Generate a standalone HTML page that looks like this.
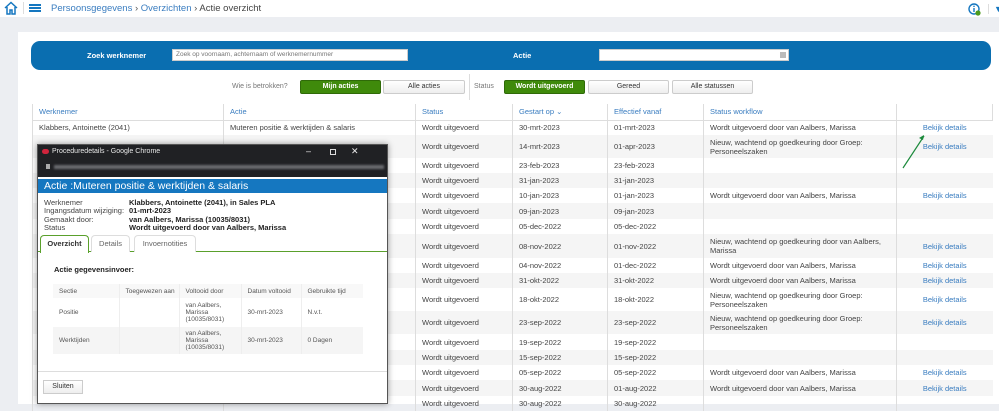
<!DOCTYPE html>
<html><head><meta charset="utf-8"><style>
*{box-sizing:border-box;margin:0;padding:0}
body{width:999px;height:404px;overflow:hidden;background:#eceef2;font-family:"Liberation Sans",Arial,sans-serif;font-size:8px;color:#333;position:relative}
.top{position:absolute;left:0;top:0;width:999px;height:17px;background:#fff;font-size:9.5px}
.panel{position:absolute;left:18px;top:32px;width:981px;height:372px;background:#fff}
.search{position:absolute;left:31px;top:41px;width:960px;height:29px;background:#0a6eb0;border-radius:9px}
.search b{position:absolute;color:#fff;font-size:7.5px;top:10px}
.inp{position:absolute;top:8px;height:12px;background:#fff;border:1px solid #ccc;font-size:6.5px;color:#777;padding:1px 3px}
.btn{position:absolute;top:80px;height:14px;border:1px solid #ccc;background:linear-gradient(#fff,#eee);font-size:7px;text-align:center;line-height:12px;color:#333;border-radius:2px}
.btn.g{background:#3f8a0b;border-color:#2f6a08;color:#fff;font-weight:bold}
table.m{position:absolute;left:32px;top:104px;border-collapse:collapse;font-size:7.5px;color:#444}
table.m td{border-left:1px solid #ddd;padding:0 6px;vertical-align:middle}
table.m tr.h td{height:16px;color:#3a7dc0;border-bottom:1px solid #ddd;background:#fff}
table.m tr:nth-child(odd):not(.h){background:#f5f5f5}
a{color:#3a7dc0;text-decoration:none}
.pop{position:absolute;left:37px;top:144px;width:351px;height:260px;background:#fff;border:1px solid #555;box-shadow:0 0 6px rgba(0,0,0,.4)}
.chrome{height:32px;background:#202124;color:#e8e8e8;font-size:7px;position:relative}
.bh{height:14px;background:#1577c0;color:#fff;font-size:10.5px;padding-left:6px;line-height:14px;margin-top:2px}
.info{padding:6px 0 0 6px;font-size:7.5px;line-height:8.3px;color:#444}
.info span{display:inline-block;width:85px}
.info b{color:#222}
.tabs{position:relative;height:17px;margin-top:3px;border-bottom:1px solid #5aa02c}
.tab{position:absolute;top:0;height:17px;border:1px solid #ddd;border-bottom:none;border-radius:4px 4px 0 0;font-size:7.5px;text-align:center;line-height:15px;color:#666;background:#fff}
table.s{border-collapse:collapse;font-size:6.5px;color:#555;margin-left:15px;table-layout:fixed;width:310px}
table.s td{padding:0 6px;border-left:1px solid #eee;white-space:nowrap}
</style></head><body>
<div class="top">
<svg style="position:absolute;left:4px;top:1px" width="14" height="14" viewBox="0 0 14 14"><path d="M1 7L7 1.5 13 7M3 6v7h3v-4h2v4h3V6" fill="none" stroke="#1577c0" stroke-width="1.5"/></svg>
<div style="position:absolute;left:23px;top:2px;width:1px;height:12px;background:#ddd"></div>
<div style="position:absolute;left:29px;top:4px;width:12px;height:2px;background:#1577c0;box-shadow:0 3px 0 #1577c0,0 6px 0 #1577c0"></div>
<div style="position:absolute;left:51px;top:3px;color:#3a7dc0">Persoonsgegevens <span style="color:#555">›</span> Overzichten <span style="color:#555">›</span> <span style="color:#444">Actie overzicht</span></div>
<svg style="position:absolute;left:968px;top:3px" width="14" height="13"><circle cx="6" cy="6" r="5" fill="none" stroke="#1577c0" stroke-width="1.4"/><rect x="5.3" y="5" width="1.4" height="4" fill="#1577c0"/><circle cx="6" cy="3.3" r=".8" fill="#1577c0"/><circle cx="10" cy="10" r="2.6" fill="#4c9a1b"/></svg>
<div style="position:absolute;left:988px;top:4px;width:1px;height:10px;background:#ddd"></div>
<div style="position:absolute;left:994px;top:4px;color:#1577c0;font-size:9px;font-weight:bold">▼</div>
</div>
<div class="panel"></div>
<div class="search"><b style="left:56px">Zoek werknemer</b><div class="inp" style="left:141px;width:236px">Zoek op voornaam, achternaam of werknemernummer</div><b style="left:482px">Actie</b><div class="inp" style="left:568px;width:190px"><div style="position:absolute;right:2px;top:2px;width:6px;height:6px;background:#bbb"></div></div></div>
<div style="position:absolute;left:232px;top:83px;font-size:7px;color:#777">Wie is betrokken?</div>
<div class="btn g" style="left:300px;width:81px">Mijn acties</div>
<div class="btn" style="left:383px;width:82px">Alle acties</div>
<div style="position:absolute;left:469px;top:74px;width:1px;height:26px;background:#ddd"></div>
<div style="position:absolute;left:474px;top:83px;font-size:7px;color:#777">Status</div>
<div class="btn g" style="left:504px;width:81px">Wordt uitgevoerd</div>
<div class="btn" style="left:588px;width:81px">Gereed</div>
<div class="btn" style="left:672px;width:81px">Alle statussen</div>
<table class="m">
<tr class="h"><td style="width:191px">Werknemer</td><td style="width:192px">Actie</td><td style="width:97px">Status</td><td style="width:95px">Gestart op ⌄</td><td style="width:96px">Effectief vanaf</td><td style="width:193px">Status workflow</td><td style="width:96px;border-right:1px solid #ddd"></td></tr>
<tr style="height:15px"><td>Klabbers, Antoinette (2041)</td><td>Muteren positie &amp; werktijden &amp; salaris</td><td>Wordt uitgevoerd</td><td>30-mrt-2023</td><td>01-mrt-2023</td><td>Wordt uitgevoerd door van Aalbers, Marissa</td><td style="text-align:center"><a>Bekijk details</a></td></tr>
<tr style="height:23px"><td></td><td></td><td>Wordt uitgevoerd</td><td>14-mrt-2023</td><td>01-apr-2023</td><td>Nieuw, wachtend op goedkeuring door Groep: Personeelszaken</td><td style="text-align:center"><a>Bekijk details</a></td></tr>
<tr style="height:15px"><td></td><td></td><td>Wordt uitgevoerd</td><td>23-feb-2023</td><td>23-feb-2023</td><td></td><td></td></tr>
<tr style="height:15px"><td></td><td></td><td>Wordt uitgevoerd</td><td>31-jan-2023</td><td>31-jan-2023</td><td></td><td></td></tr>
<tr style="height:15px"><td></td><td></td><td>Wordt uitgevoerd</td><td>10-jan-2023</td><td>01-jan-2023</td><td>Wordt uitgevoerd door van Aalbers, Marissa</td><td style="text-align:center"><a>Bekijk details</a></td></tr>
<tr style="height:16px"><td></td><td></td><td>Wordt uitgevoerd</td><td>09-jan-2023</td><td>09-jan-2023</td><td></td><td></td></tr>
<tr style="height:15px"><td></td><td></td><td>Wordt uitgevoerd</td><td>05-dec-2022</td><td>05-dec-2022</td><td></td><td></td></tr>
<tr style="height:24px"><td></td><td></td><td>Wordt uitgevoerd</td><td>08-nov-2022</td><td>01-nov-2022</td><td>Nieuw, wachtend op goedkeuring door van Aalbers, Marissa</td><td style="text-align:center"><a>Bekijk details</a></td></tr>
<tr style="height:15px"><td></td><td></td><td>Wordt uitgevoerd</td><td>04-nov-2022</td><td>01-dec-2022</td><td>Wordt uitgevoerd door van Aalbers, Marissa</td><td style="text-align:center"><a>Bekijk details</a></td></tr>
<tr style="height:15px"><td></td><td></td><td>Wordt uitgevoerd</td><td>31-okt-2022</td><td>31-okt-2022</td><td>Wordt uitgevoerd door van Aalbers, Marissa</td><td style="text-align:center"><a>Bekijk details</a></td></tr>
<tr style="height:23px"><td></td><td></td><td>Wordt uitgevoerd</td><td>18-okt-2022</td><td>18-okt-2022</td><td>Nieuw, wachtend op goedkeuring door Groep: Personeelszaken</td><td style="text-align:center"><a>Bekijk details</a></td></tr>
<tr style="height:23px"><td></td><td></td><td>Wordt uitgevoerd</td><td>23-sep-2022</td><td>23-sep-2022</td><td>Nieuw, wachtend op goedkeuring door Groep: Personeelszaken</td><td style="text-align:center"><a>Bekijk details</a></td></tr>
<tr style="height:16px"><td></td><td></td><td>Wordt uitgevoerd</td><td>19-sep-2022</td><td>19-sep-2022</td><td></td><td></td></tr>
<tr style="height:15px"><td></td><td></td><td>Wordt uitgevoerd</td><td>15-sep-2022</td><td>15-sep-2022</td><td></td><td></td></tr>
<tr style="height:15px"><td></td><td></td><td>Wordt uitgevoerd</td><td>05-sep-2022</td><td>05-sep-2022</td><td>Wordt uitgevoerd door van Aalbers, Marissa</td><td style="text-align:center"><a>Bekijk details</a></td></tr>
<tr style="height:16px"><td></td><td></td><td>Wordt uitgevoerd</td><td>30-aug-2022</td><td>01-aug-2022</td><td>Wordt uitgevoerd door van Aalbers, Marissa</td><td style="text-align:center"><a>Bekijk details</a></td></tr>
<tr style="height:15px"><td></td><td></td><td>Wordt uitgevoerd</td><td>30-aug-2022</td><td>30-aug-2022</td><td></td><td></td></tr>
</table>
<svg style="position:absolute;left:900px;top:132px" width="30" height="40"><path d="M3 36L24 4" stroke="#1c8a3c" stroke-width="1.2"/><path d="M24 3l-5 3 4 2z" fill="#1c8a3c"/></svg>
<div class="pop">
<div class="chrome">
<div style="position:absolute;left:4px;top:4px;width:7px;height:5px;background:#d0243c;border-radius:3px"></div>
<div style="position:absolute;left:14px;top:3px">Proceduredetails - Google Chrome</div>
<div style="position:absolute;left:268px;top:1px;font-size:9px">–</div>
<div style="position:absolute;left:292px;top:4px;width:6px;height:6px;border:1px solid #ddd"></div>
<div style="position:absolute;left:313px;top:1px;font-size:9px">✕</div>
<div style="position:absolute;left:8px;top:19px;width:4px;height:5px;background:#aaa"></div>
<div style="position:absolute;left:16px;top:20px;width:330px;height:4px;background:#6a6b70;filter:blur(1px)"></div>
</div>
<div class="bh">Actie :Muteren positie &amp; werktijden &amp; salaris</div>
<div class="info">
<div><span>Werknemer</span><b>Klabbers, Antoinette (2041), in Sales PLA</b></div>
<div><span>Ingangsdatum wijziging:</span><b>01-mrt-2023</b></div>
<div><span>Gemaakt door:</span><b>van Aalbers, Marissa (10035/8031)</b></div>
<div><span>Status</span><b>Wordt uitgevoerd door van Aalbers, Marissa</b></div>
</div>
<div class="tabs">
<div class="tab" style="left:2px;width:49px;border-color:#5aa02c;color:#333;font-weight:bold;height:18px">Overzicht</div>
<div class="tab" style="left:53px;width:39px">Details</div>
<div class="tab" style="left:96px;width:62px">Invoernotities</div>
</div>
<div style="font-size:7.5px;font-weight:bold;color:#222;margin:13px 0 0 16px">Actie gegevensinvoer:</div>
<table class="s" style="margin-top:10px">
<tr style="height:14px;background:#f8f8f8"><td style="width:66px;border-left:none">Sectie</td><td style="width:60px">Toegewezen aan</td><td style="width:62px">Voltooid door</td><td style="width:60px">Datum voltooid</td><td style="width:62px">Gebruikte tijd</td></tr>
<tr style="height:29px"><td style="border-left:none">Positie</td><td></td><td>van Aalbers,<br>Marissa<br>(10035/8031)</td><td>30-mrt-2023</td><td>N.v.t.</td></tr>
<tr style="height:27px;background:#f5f5f5"><td style="border-left:none">Werktijden</td><td></td><td>van Aalbers,<br>Marissa<br>(10035/8031)</td><td>30-mrt-2023</td><td>0 Dagen</td></tr>
</table>
<div style="position:absolute;left:0;top:226px;width:349px;height:1px;background:#ddd"></div>
<div style="position:absolute;left:5px;top:235px;width:40px;height:14px;border:1px solid #ccc;background:linear-gradient(#fff,#eee);font-size:7px;text-align:center;line-height:12px">Sluiten</div>
</div>
</body></html>
